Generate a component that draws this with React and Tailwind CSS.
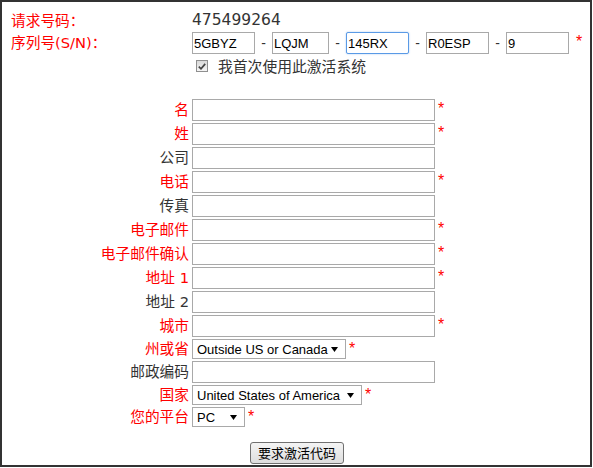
import React from 'react'

const FONT = "font-['DejaVu_Sans','Noto_Sans_CJK_SC',sans-serif]"
const INPUT_FONT = "font-['Liberation_Sans','Noto_Sans_CJK_SC',sans-serif]"

function Star({ gap = 'ml-[3px]' }) {
  return (
    <span className={`${gap} self-start mt-[2px] text-[16px] leading-none text-[#f00] ${INPUT_FONT}`}>*</span>
  )
}

function TextBox({ value = '', width = 'w-[243px]', focused = false }) {
  return (
    <input
      readOnly
      value={value}
      className={`${width} h-[22px] border px-[1px] text-[13px] text-black bg-white outline-none ${INPUT_FONT} ${
        focused
          ? 'border-[#5a9ae6] rounded-[2px] shadow-[0_0_2px_#a9c9f0]'
          : 'border-[#a9a9a9]'
      }`}
    />
  )
}

function FauxSelect({ value, width }) {
  return (
    <div
      className={`${width} h-[20px] border border-[#a9a9a9] bg-white flex items-center justify-between pl-[4px] pr-[7px] text-[13px] leading-none text-black ${INPUT_FONT}`}
    >
      <span className="whitespace-nowrap">{value}</span>
      <svg width="7" height="5" viewBox="0 0 7 5" className="shrink-0">
        <polygon points="0,0 7,0 3.5,5" fill="#000" />
      </svg>
    </div>
  )
}

const rows = [
  { label: '名', req: true },
  { label: '姓', req: true },
  { label: '公司' },
  { label: '电话', req: true },
  { label: '传真' },
  { label: '电子邮件', req: true },
  { label: '电子邮件确认', req: true },
  { label: '地址 1', req: true },
  { label: '地址 2' },
  { label: '城市', req: true },
  { label: '州或省', req: true, select: 'Outside US or Canada', w: 'w-[154px]' },
  { label: '邮政编码' },
  { label: '国家', req: true, select: 'United States of America', w: 'w-[170px]' },
  { label: '您的平台', req: true, select: 'PC', w: 'w-[53px]' },
]

const serial = [
  { v: '5GBYZ', w: 'w-[63px]' },
  { v: 'LQJM', w: 'w-[57px]' },
  { v: '145RX', w: 'w-[63px]', focused: true },
  { v: 'R0ESP', w: 'w-[63px]' },
  { v: '9', w: 'w-[63px]' },
]

export default function App() {
  return (
    <div className={`w-[592px] h-[467px] border-2 border-[#333] bg-white ${FONT}`}>
      {/* Header: request code + serial */}
      <div className="pt-[8px]">
        <div className="flex items-center h-[22px]">
          <div className="w-[190px] pl-[9px] text-[14.7px] leading-none text-[#f00]">请求号码：</div>
          <div className="text-[15.5px] leading-none text-[#333]">475499264</div>
        </div>
        <div className="flex items-center h-[22px]">
          <div className="w-[190px] pl-[9px] text-[14.7px] leading-none text-[#f00] whitespace-nowrap">序列号(S/N)：</div>
          {serial.map((s, i) => (
            <React.Fragment key={s.v}>
              {i > 0 && (
                <span className={`w-[17px] text-center text-[14px] leading-none text-[#333] ${INPUT_FONT}`}>-</span>
              )}
              <TextBox value={s.v} width={s.w} focused={s.focused} />
            </React.Fragment>
          ))}
          <Star gap="ml-[7px]" />
        </div>
        <div className="mt-[2px] flex items-center h-[22px] pl-[194px]">
          <span className="self-start mt-[4px] w-[12px] h-[12px] border border-[#8f8f8f] bg-linear-to-b from-[#d9d9d9] to-[#f5f5f5] flex items-center justify-center">
            <svg width="8" height="7" viewBox="0 0 8 7">
              <path d="M0.8 3.6 L3 5.8 L7.2 0.9" fill="none" stroke="#444" strokeWidth="1.7" />
            </svg>
          </span>
          <span className="ml-[10px] text-[14.8px] leading-none text-[#333]">我首次使用此激活系统</span>
        </div>
      </div>

      {/* Contact form */}
      <div className="mt-[21px] flex flex-col gap-[2px]">
        {rows.map((r) => (
          <div key={r.label} className="flex items-center">
            <div
              className={`w-[187px] mr-[3px] text-right text-[14.7px] leading-none whitespace-nowrap ${
                r.req ? 'text-[#f00]' : 'text-[#333]'
              }`}
            >
              {r.label}
            </div>
            {r.select ? <FauxSelect value={r.select} width={r.w} /> : <TextBox />}
            {r.req && <Star />}
          </div>
        ))}
      </div>

      <div className="mt-[15px] flex justify-center pl-[2px]">
        <button
          className={`w-[94px] h-[22px] border border-[#707070] rounded-[3px] bg-linear-to-b from-[#f4f4f4] to-[#dedede] text-[13px] leading-none text-black ${FONT}`}
        >
          要求激活代码
        </button>
      </div>
    </div>
  )
}
